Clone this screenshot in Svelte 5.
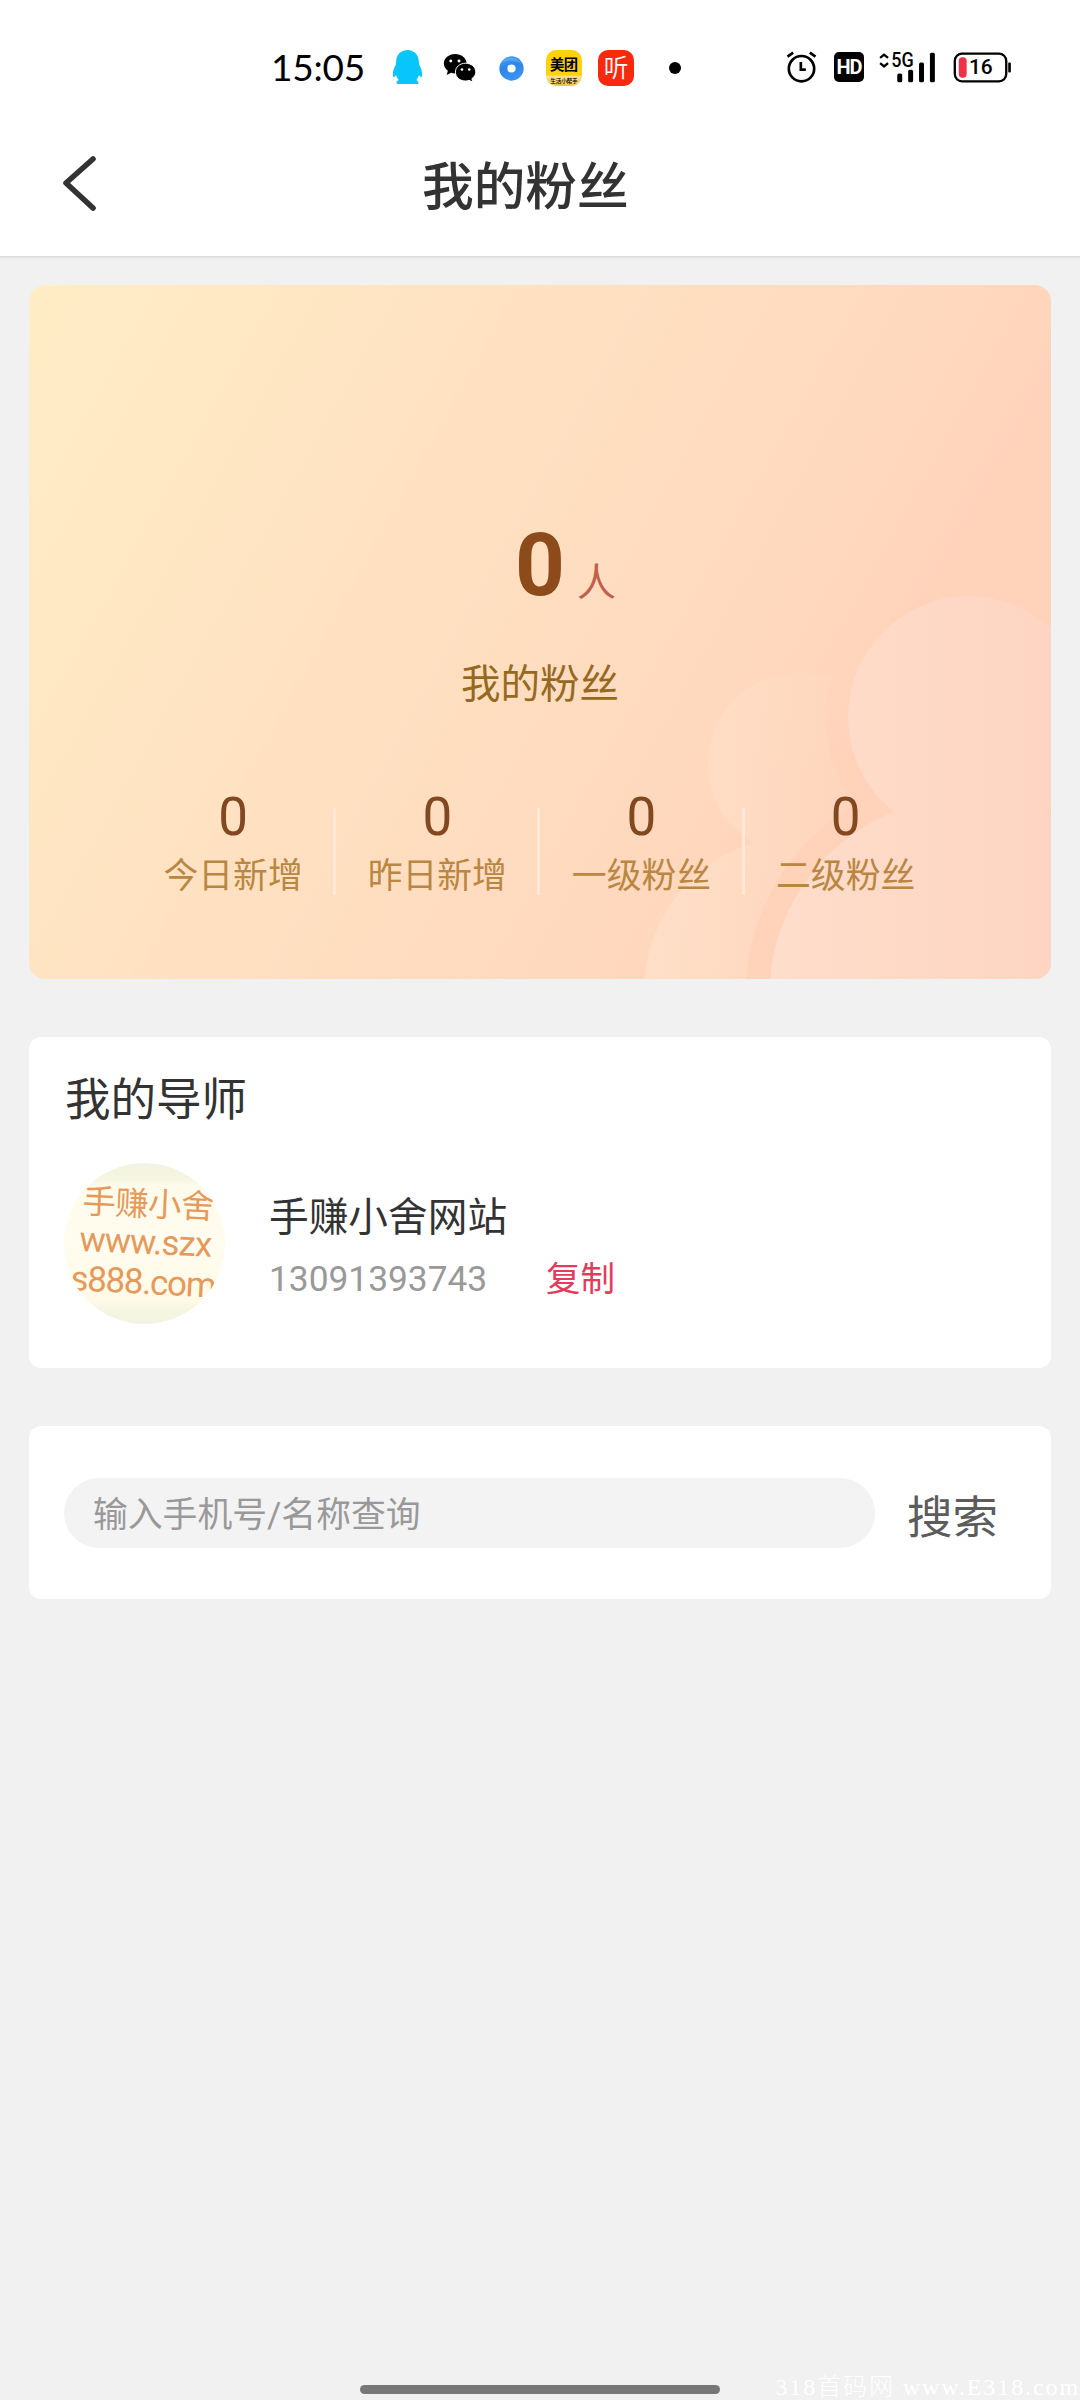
<script>
  let keyword = "";

  const total = 0;

  const stats = [
    { label: "今日新增", value: 0 },
    { label: "昨日新增", value: 0 },
    { label: "一级粉丝", value: 0 },
    { label: "二级粉丝", value: 0 },
  ];

  const mentor = { name: "手赚小舍网站", phone: "13091393743" };
</script>

<div class="page">
  <div class="status">
    <span class="time">15:05</span>

    <svg class="qq" viewBox="428 60 92 108">
      <path
        d="M474 63c-20 0-34 15-34 35 0 7-2 11-5 17-4 9-6 20-4 28 1 3 5 0 9-5 1 6 4 11 8 15-4 2-7 5-7 9 0 3 5 3 10 3h46c5 0 10 0 10-3 0-4-3-7-7-9 4-4 7-9 8-15 4 5 8 8 9 5 2-8 0-19-4-28-3-6-5-10-5-17 0-20-14-35-34-35z"
        fill="#08c5fc"
      />
    </svg>

    <svg class="wechat" viewBox="580 66 102 94">
      <path
        d="M616 72c-19 0-34 13-34 29 0 9 5 17 12 22l-3 13 13-7c4 1 8 2 12 2 19 0 35-13 35-30s-16-29-35-29z"
      />
      <path
        d="M648 100c-18 0-31 12-31 27s13 27 31 27c4 0 7-1 10-2l12 5-3-10c7-5 12-12 12-20 0-15-14-27-31-27z"
        stroke="#fff"
        stroke-width="3"
      />
      <circle cx="603" cy="93" r="4.5" fill="#fff" />
      <circle cx="628" cy="93" r="4.5" fill="#fff" />
      <circle cx="637" cy="119" r="4" fill="#fff" />
      <circle cx="659" cy="119" r="4" fill="#fff" />
    </svg>

    <svg class="ring" viewBox="748 76 76 76">
      <defs>
        <linearGradient id="ring" x1="0" y1="0" x2="0.4" y2="1">
          <stop offset="0" stop-color="#46a4f6" />
          <stop offset="0.5" stop-color="#2c86e8" />
          <stop offset="1" stop-color="#3b93f2" />
        </linearGradient>
      </defs>
      <circle cx="786" cy="114" r="37" fill="url(#ring)" />
      <path d="M754 99c8-20 50-28 64 2-14-12-48-16-64-2z" fill="#6db9f8" opacity="0.5" />
      <circle cx="786" cy="114" r="12.5" fill="#fff" />
    </svg>

    <svg class="app meituan" viewBox="0 0 108 108">
      <defs>
        <linearGradient id="meituan" x1="0" y1="0" x2="0" y2="1">
          <stop offset="0.69" stop-color="#ffd20a" />
          <stop offset="0.74" stop-color="#f9e29b" />
          <stop offset="1" stop-color="#f0c545" />
        </linearGradient>
      </defs>
      <rect width="108" height="108" rx="30" fill="url(#meituan)" />
      <text x="12" y="60" font-size="43" font-weight="700" textLength="84">美团</text>
      <text x="13" y="98" font-size="17" font-weight="500" textLength="82">生活小帮手</text>
    </svg>

    <svg class="app ting" viewBox="0 0 108 108">
      <rect width="108" height="108" rx="30" fill="#f8290c" />
      <text x="17" y="81" font-size="74" fill="#fff">听</text>
    </svg>

    <span class="dot"></span>

    <svg class="alarm" viewBox="80 64 92 96" fill="none" stroke="#000" stroke-width="8">
      <circle cx="126" cy="117" r="38" />
      <path d="M124 97v23h15M84 81l17-12M151 69l17 12" />
    </svg>

    <span class="hd">HD</span>

    <svg class="signal" viewBox="356 64 172 94">
      <g fill="none" stroke="#000" stroke-width="7">
        <path d="M359 82l12-10 12 10M359 98l12 10 12-10" />
      </g>
      <text x="393" y="109" font-size="59" textLength="68" lengthAdjust="spacingAndGlyphs">5G</text>
      <rect x="411" y="129" width="15" height="27" rx="5" />
      <rect x="444" y="118" width="15" height="38" rx="5" />
      <rect x="477" y="96" width="15" height="60" rx="5" />
      <rect x="510" y="66" width="15" height="90" rx="5" />
    </svg>

    <svg class="battery" viewBox="578 64 176 94">
      <rect x="582" y="69" width="156" height="84" rx="22" fill="none" stroke="#000" stroke-width="7" />
      <rect x="594" y="80" width="24" height="62" rx="11" fill="#ef3347" />
      <rect x="744" y="96" width="8" height="30" rx="3" />
      <text x="625" y="132" font-size="61" textLength="72" lengthAdjust="spacingAndGlyphs">16</text>
    </svg>
  </div>

  <header>
    <button class="back" aria-label="返回">
      <svg viewBox="0 0 36 56">
        <path d="M32 4 5 28 32 53" />
      </svg>
    </button>
    <h1>我的粉丝</h1>
  </header>

  <main>
    <section class="fans">
      <svg class="people" viewBox="0 0 1022 694">
        <defs>
          <mask id="gap">
            <rect width="1022" height="694" fill="#fff" />
            <circle cx="940" cy="432" r="144" fill="#000" />
            <circle cx="940" cy="712" r="224" fill="#000" />
          </mask>
          <linearGradient id="back" gradientUnits="userSpaceOnUse" x1="616" y1="0" x2="830" y2="0">
            <stop offset="0" stop-color="#ffe2cb" />
            <stop offset="1" stop-color="#fed7bd" />
          </linearGradient>
          <linearGradient id="front" gradientUnits="userSpaceOnUse" x1="740" y1="0" x2="1022" y2="0">
            <stop offset="0" stop-color="#feddca" />
            <stop offset="1" stop-color="#fed5c3" />
          </linearGradient>
        </defs>
        <g mask="url(#gap)" fill="url(#back)" opacity="0.75">
          <circle cx="770" cy="479" r="91" />
          <circle cx="770" cy="706" r="155" />
        </g>
        <g fill="url(#front)">
          <circle cx="940" cy="432" r="121" />
          <circle cx="940" cy="712" r="200" />
        </g>
      </svg>

      <div class="total">
        <strong>{total}</strong>
        <span class="unit">人</span>
      </div>
      <p class="caption">我的粉丝</p>

      <ul class="stats">
        {#each stats as stat (stat.label)}
          <li>
            <span class="value">{stat.value}</span>
            <span class="label">{stat.label}</span>
          </li>
        {/each}
      </ul>
    </section>

    <section class="card mentor">
      <h2>我的导师</h2>
      <div class="row">
        <svg class="avatar" viewBox="0 0 161 161">
          <defs>
            <clipPath id="round"><circle cx="80.5" cy="80.5" r="80.5" /></clipPath>
            <linearGradient id="paper" x1="0" y1="0" x2="0" y2="1">
              <stop offset="0" stop-color="#f1f4e0" />
              <stop offset="0.1" stop-color="#f4f6e2" />
              <stop offset="0.14" stop-color="#fffbea" />
              <stop offset="0.5" stop-color="#fffdf0" />
              <stop offset="0.86" stop-color="#fefae6" />
              <stop offset="0.92" stop-color="#f4f6e2" />
              <stop offset="1" stop-color="#f1f4e0" />
            </linearGradient>
          </defs>
          <g clip-path="url(#round)">
            <rect width="161" height="161" fill="url(#paper)" />
            <g fill="#e59a5c">
              <text x="18" y="50" font-size="33.5" textLength="132" transform="rotate(2.5 18 50)">手赚小舍</text>
              <text x="15" y="88" font-size="35" textLength="133" transform="rotate(2.5 15 88)">www.szx</text>
              <text x="6" y="127" font-size="35" textLength="146" transform="rotate(3 6 127)">s888.com</text>
            </g>
          </g>
        </svg>
        <div class="info">
          <div class="name">{mentor.name}</div>
          <div class="contact">
            <span class="phone">{mentor.phone}</span>
            <button class="copy">复制</button>
          </div>
        </div>
      </div>
    </section>

    <section class="card search">
      <input bind:value={keyword} placeholder="输入手机号/名称查询" />
      <button>搜索</button>
    </section>
  </main>

  <footer>
    <span class="home"></span>
    <span class="mark">318首码网 www.E318.com</span>
  </footer>
</div>

<style>
  :global(body) {
    background: #f1f1f1;
  }

  .page {
    position: relative;
    display: flex;
    flex-direction: column;
    height: 2400px;
    overflow: hidden;
    background: #f1f1f1;
    color: #333;
    font-family: Roboto, "Noto Sans CJK SC", sans-serif;
  }

  h1,
  h2,
  p,
  ul {
    margin: 0;
    padding: 0;
    font-weight: 400;
  }

  button {
    padding: 0;
    border: 0;
    background: none;
    font: inherit;
  }

  svg {
    display: block;
    flex: none;
  }

  .status {
    display: flex;
    align-items: center;
    height: 134px;
    padding-left: 271px;
    background: #fff;
    color: #000;
  }

  .status svg {
    overflow: visible;
  }

  .time {
    width: 121px;
    margin-top: -2px;
    font-family: Lato, sans-serif;
    font-size: 37px;
    letter-spacing: -0.2px;
  }

  .qq {
    width: 31px;
    height: 36px;
    margin-right: 20px;
  }

  .wechat {
    width: 34px;
    height: 31px;
    margin-right: 22px;
  }

  .ring {
    width: 25px;
    height: 25px;
    margin: 2px 22px 0 0;
  }

  .app {
    width: 36px;
    height: 36px;
    margin-top: 2px;
  }

  .meituan {
    margin-right: 16px;
  }

  .ting {
    margin-right: 35px;
  }

  .ting text {
    font-weight: 350;
  }

  .dot {
    width: 12px;
    height: 12px;
    margin: 2px 105px 0 0;
    border-radius: 50%;
    background: #000;
  }

  .alarm {
    width: 31px;
    height: 32px;
    margin-right: 17px;
  }

  .hd {
    width: 30px;
    height: 30px;
    margin-right: 15px;
    border-radius: 5px;
    background: #000;
    color: #fff;
    font-size: 20px;
    font-weight: 700;
    line-height: 30px;
    text-align: center;
    letter-spacing: -1px;
  }

  .signal {
    width: 57px;
    height: 31px;
    margin-right: 17px;
  }

  .battery {
    width: 59px;
    height: 31px;
  }

  .battery text,
  .signal text {
    font-weight: 500;
  }

  header {
    display: flex;
    align-items: center;
    height: 122px;
    background: #fff;
    border-bottom: 1px solid #dadada;
    box-shadow: 0 1px 2px rgba(0, 0, 0, 0.08);
  }

  .back {
    margin: -24px 0 0 61px;
  }

  .back svg {
    width: 36px;
    height: 56px;
    fill: none;
    stroke: #333;
    stroke-width: 5.6;
    stroke-linecap: round;
    stroke-linejoin: round;
  }

  h1 {
    margin: -14px 0 0 325px;
    font-size: 51.7px;
    font-weight: 500;
    line-height: 70px;
  }

  main {
    display: flex;
    flex-direction: column;
    padding: 28px 29px 0;
  }

  .fans {
    position: relative;
    height: 694px;
    border-radius: 16px;
    overflow: hidden;
    background: linear-gradient(119deg, #ffedc6 0%, #ffe0c1 41%, #ffd7bd 71%, #ffd2ba 77%);
  }

  .people {
    position: absolute;
    inset: 0;
    width: 1022px;
    height: 694px;
  }

  .total {
    position: relative;
    display: grid;
    grid-template-columns: 1fr auto 1fr;
    align-items: baseline;
    column-gap: 12px;
    margin-top: 230px;
    line-height: 100px;
  }

  .total strong {
    grid-column: 2;
    color: #8d4b1b;
    font-size: 87px;
    font-weight: 700;
  }

  .unit {
    position: relative;
    top: 1px;
    color: #bf604d;
    font-size: 39px;
  }

  .caption {
    position: relative;
    margin-top: 24px;
    color: #97691f;
    font-size: 39.5px;
    line-height: 58px;
    text-align: center;
  }

  .stats {
    position: relative;
    display: grid;
    grid-template-columns: repeat(4, 204.2px);
    margin: 66px 0 0 102px;
    list-style: none;
  }

  .stats li {
    position: relative;
    display: flex;
    flex-direction: column;
    align-items: center;
  }

  .stats li:not(:last-child)::after {
    content: "";
    position: absolute;
    right: -1px;
    top: 28px;
    width: 3px;
    height: 87px;
    background: #ffe9d6;
  }

  .value {
    color: #824820;
    font-size: 53px;
    line-height: 74px;
  }

  .label {
    color: #b98742;
    font-size: 34.8px;
    line-height: 44px;
  }

  .card {
    background: #fff;
    border-radius: 12px;
  }

  .mentor {
    height: 331px;
    margin-top: 58px;
    padding: 34px 35px 0;
    box-sizing: border-box;
  }

  h2 {
    font-size: 45.5px;
    line-height: 60px;
    text-indent: 1px;
  }

  .row {
    display: flex;
    margin-top: 32px;
  }

  .avatar {
    width: 161px;
    height: 161px;
  }

  .info {
    margin: 27px 0 0 44px;
  }

  .name {
    font-size: 39.7px;
    line-height: 56px;
  }

  .contact {
    display: flex;
    align-items: center;
    margin-top: 3px;
    font-size: 34.5px;
    line-height: 60px;
  }

  .phone {
    width: 277px;
    color: #999;
    font-size: 35.3px;
  }

  .copy {
    color: #e23c5d;
  }

  .search {
    display: flex;
    align-items: center;
    height: 173px;
    margin-top: 58px;
    padding-left: 35px;
  }

  input {
    width: 811px;
    height: 70px;
    box-sizing: border-box;
    padding: 4px 29px 0;
    border: 0;
    border-radius: 35px;
    background: #f3f3f3;
    font: inherit;
    font-size: 34.8px;
  }

  input::placeholder {
    color: #999;
    opacity: 1;
  }

  .search button {
    margin: 3px 0 0 32px;
    color: #5c5c5c;
    font-size: 45.5px;
  }

  footer {
    position: relative;
    display: flex;
    justify-content: center;
    margin-top: auto;
    padding-bottom: 6px;
  }

  .home {
    width: 360px;
    height: 9px;
    border-radius: 5px;
    background: #777;
  }

  .mark {
    position: absolute;
    right: 0;
    bottom: 0;
    color: #fff;
    font-family: "Liberation Serif", "Noto Sans CJK SC", serif;
    font-size: 24px;
    font-weight: 300;
    line-height: 25px;
    letter-spacing: 1.9px;
    white-space: nowrap;
  }
</style>
